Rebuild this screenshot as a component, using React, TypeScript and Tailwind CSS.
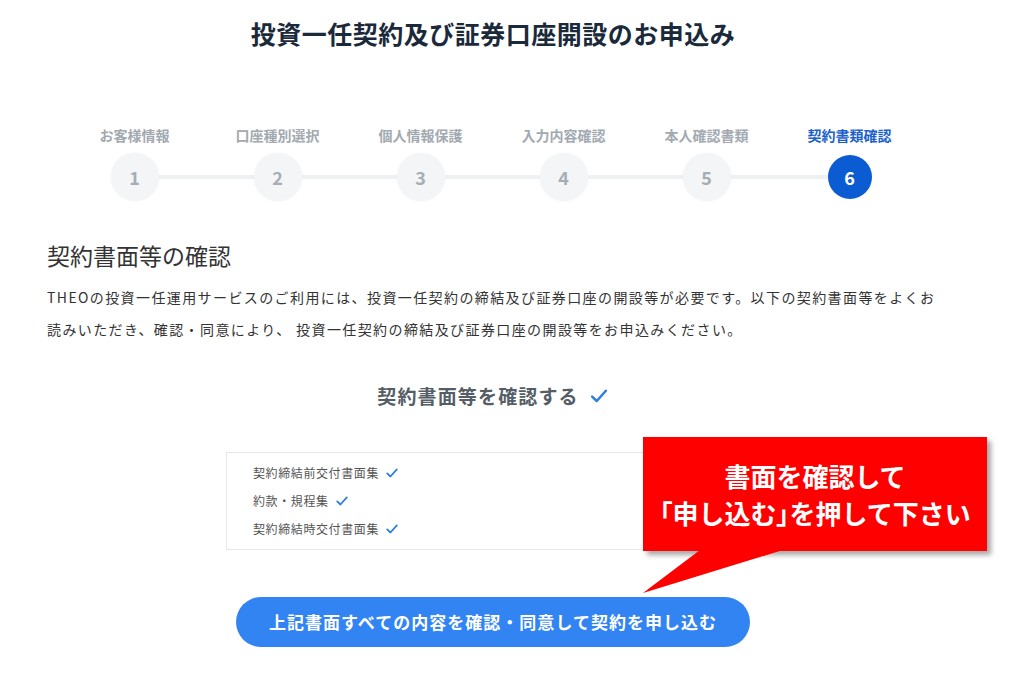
const steps = [
  { label: 'お客様情報', num: 1 },
  { label: '口座種別選択', num: 2 },
  { label: '個人情報保護', num: 3 },
  { label: '入力内容確認', num: 4 },
  { label: '本人確認書類', num: 5 },
  { label: '契約書類確認', num: 6 },
]

const docs = ['契約締結前交付書面集', '約款・規程集', '契約締結時交付書面集']

const font = { fontFamily: '"Noto Sans CJK JP", "Noto Sans", sans-serif' }

function Check({ size = 14 }: { size?: number }) {
  return (
    <svg width={size} height={size} viewBox="0 0 16 16" fill="none">
      <path
        d="M2.5 8.5 L6.2 12 L13.5 3.8"
        stroke="#2a7de1"
        strokeWidth="2"
        strokeLinecap="round"
        strokeLinejoin="round"
      />
    </svg>
  )
}

function Stepper() {
  return (
    <div className="flex ml-[16px]">
      {steps.map((s, i) => {
        const active = s.num === 6
        return (
          <div key={s.num} className="w-[143px] flex flex-col items-center">
            <div
              className={`text-[14px] font-semibold leading-[20px] ${
                active ? 'text-[#1c5fce]' : 'text-[#a2a9b1]'
              }`}
            >
              {s.label}
            </div>
            <div className="mt-[7px] flex items-center w-full h-[50px]">
              <div className={`flex-1 h-[4px] ${i === 0 ? '' : 'bg-[#eef0f2]'}`} />
              {active ? (
                <div className="w-[44px] h-[44px] rounded-full bg-[#0b5bd3] flex items-center justify-center text-white text-[18px] font-bold">
                  {s.num}
                </div>
              ) : (
                <div className="w-[48px] h-[48px] rounded-full bg-[#f4f5f6] shadow-[0_0_2px_rgba(0,0,0,0.06)] flex items-center justify-center text-[#a6adb4] text-[18px] font-bold">
                  {s.num}
                </div>
              )}
              <div
                className={`flex-1 h-[4px] ${i === steps.length - 1 ? '' : 'bg-[#eef0f2]'}`}
              />
            </div>
          </div>
        )
      })}
    </div>
  )
}

export default function App() {
  return (
    <div className="relative w-[1024px] h-[691px] bg-white overflow-hidden" style={font}>
      <div className="w-[986px] pt-[18px] pl-[47px]">
        <h1 className="text-center -ml-[47px] text-[25px] leading-[30px] font-bold text-[#1b2a3a] tracking-[0.02em]">
          投資一任契約及び証券口座開設のお申込み
        </h1>

        <div className="mt-[77px]">
          <Stepper />
        </div>

        <h2 className="mt-[38px] text-[23px] leading-[30px] text-[#333]">契約書面等の確認</h2>

        <p className="mt-[11px] text-[14px] leading-[32px] tracking-[0.1em] text-[#333]">
          THEOの投資一任運用サービスのご利用には、投資一任契約の締結及び証券口座の開設等が必要です。以下の契約書面等をよくお
          <br />
          読みいただき、確認・同意により、 投資一任契約の締結及び証券口座の開設等をお申込みください。
        </p>

        <div className="-ml-[47px] mt-[37px] flex items-center justify-center gap-[10px]">
          <span className="text-[19px] leading-[28px] font-bold text-[#555d66] tracking-[0.06em]">
            契約書面等を確認する
          </span>
          <Check size={20} />
        </div>

        <div className="ml-[179px] mt-[42px] w-[530px] border border-[#e6e7e8] py-[6px] pl-[26px]">
          {docs.map((d) => (
            <div
              key={d}
              className="flex items-center gap-[6px] text-[12px] leading-[28px] tracking-[0.05em] text-[#555]"
            >
              <span>{d}</span>
              <Check size={14} />
            </div>
          ))}
        </div>

        <div className="ml-[189px] mt-[47px] w-[514px] h-[50px] rounded-full bg-[#3384f3] flex items-center justify-center text-white text-[17px] font-bold tracking-[0.06em]">
          上記書面すべての内容を確認・同意して契約を申し込む
        </div>
      </div>

      {/* callout */}
      <div className="absolute left-[643px] top-[437px] w-[344px] h-[114px] bg-[#ff0000] shadow-[4px_4px_5px_rgba(0,0,0,0.35)] flex flex-col items-center justify-center text-white text-[26px] leading-[37px] font-bold">
        <div>書面を確認して</div>
        <div>
          <span className="[font-feature-settings:'palt']">「</span>申し込む
          <span className="[font-feature-settings:'palt']">」</span>を押して下さい
        </div>
      </div>
      <svg className="absolute left-[640px] top-[550px]" width="150" height="48" viewBox="0 0 150 48">
        <polygon points="60,0 143,0 3,43" fill="#ff0000" />
      </svg>
    </div>
  )
}
